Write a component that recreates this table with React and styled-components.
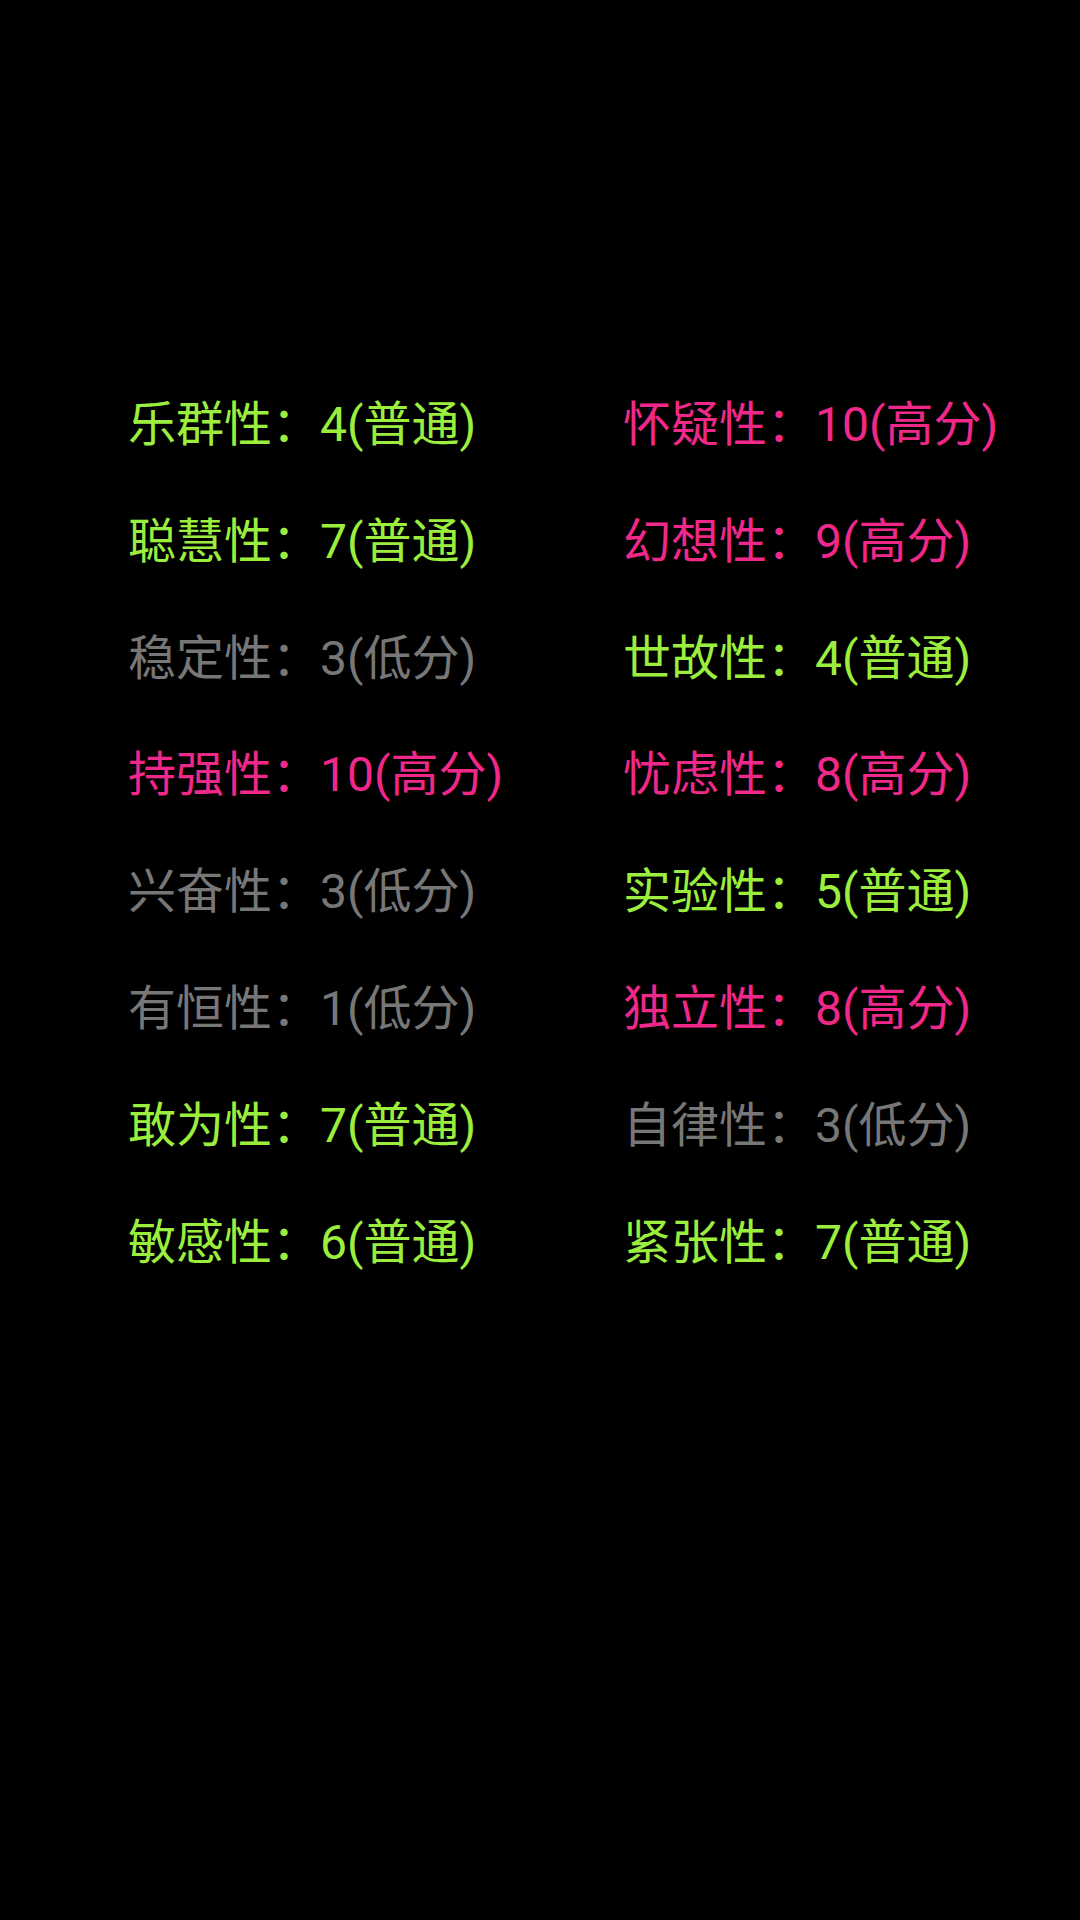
import React from 'react';
import styled, { createGlobalStyle } from 'styled-components';

const GlobalStyle = createGlobalStyle`
	html, body {
		margin: 0;
		padding: 0;
		background: #000;
	}
`;

const COLORS = {
	normal: '#9cee3e',
	high: '#f0288a',
	low: '#777777',
};

const traits = [
	{ name: '乐群性', score: 4, level: 'normal' },
	{ name: '怀疑性', score: 10, level: 'high' },
	{ name: '聪慧性', score: 7, level: 'normal' },
	{ name: '幻想性', score: 9, level: 'high' },
	{ name: '稳定性', score: 3, level: 'low' },
	{ name: '世故性', score: 4, level: 'normal' },
	{ name: '持强性', score: 10, level: 'high' },
	{ name: '忧虑性', score: 8, level: 'high' },
	{ name: '兴奋性', score: 3, level: 'low' },
	{ name: '实验性', score: 5, level: 'normal' },
	{ name: '有恒性', score: 1, level: 'low' },
	{ name: '独立性', score: 8, level: 'high' },
	{ name: '敢为性', score: 7, level: 'normal' },
	{ name: '自律性', score: 3, level: 'low' },
	{ name: '敏感性', score: 6, level: 'normal' },
	{ name: '紧张性', score: 7, level: 'normal' },
];

const LABELS = {
	normal: '普通',
	high: '高分',
	low: '低分',
};

export default function App() {
	return (
		<Screen>
			<GlobalStyle />
			<Grid>
				{traits.map((t) => (
					<Trait key={t.name} $level={t.level}>
						{t.name}：{t.score}({LABELS[t.level]})
					</Trait>
				))}
			</Grid>
		</Screen>
	);
}

const Screen = styled.div`
	width: 1080px;
	height: 1920px;
	background: #000;
	box-sizing: border-box;
	padding-top: 367px;
	padding-left: 128px;
	overflow: hidden;
`;

const Grid = styled.div`
	display: grid;
	grid-template-columns: 495px 1fr;
	grid-auto-rows: 116.8px;
`;

const Trait = styled.div`
	font-family: Roboto, "Noto Sans CJK SC", sans-serif;
	font-size: 48px;
	line-height: 116.8px;
	white-space: nowrap;
	color: ${(p) => COLORS[p.$level]};
`;
